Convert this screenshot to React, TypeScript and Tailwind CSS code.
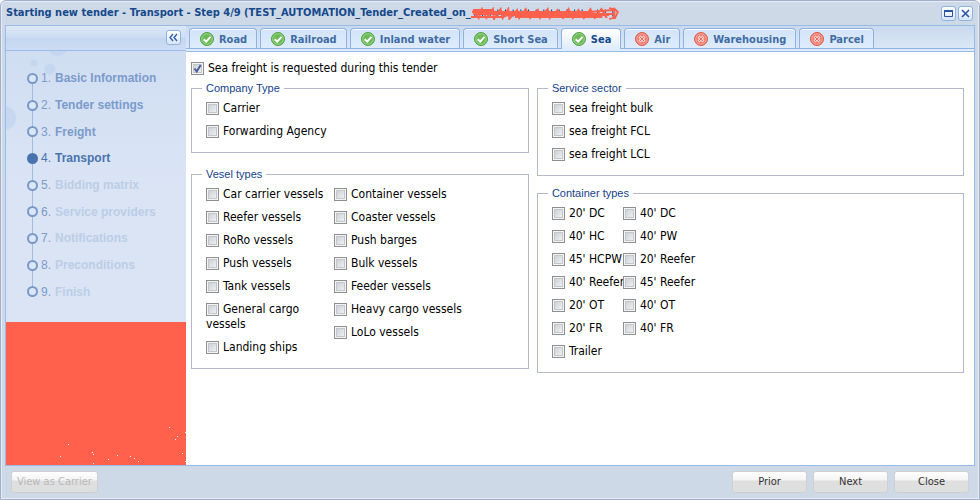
import React from "react";

type TabInfo = { name: string; ok: boolean; active?: boolean };

const tabs: TabInfo[] = [
  { name: "Road", ok: true },
  { name: "Railroad", ok: true },
  { name: "Inland water", ok: true },
  { name: "Short Sea", ok: true },
  { name: "Sea", ok: true, active: true },
  { name: "Air", ok: false },
  { name: "Warehousing", ok: false },
  { name: "Parcel", ok: false },
];

const steps = [
  "Basic Information",
  "Tender settings",
  "Freight",
  "Transport",
  "Bidding matrix",
  "Service providers",
  "Notifications",
  "Preconditions",
  "Finish",
];
const currentStep = 3;

const vesselsLeft = [
  "Car carrier vessels",
  "Reefer vessels",
  "RoRo vessels",
  "Push vessels",
  "Tank vessels",
  "General cargo vessels",
  "Landing ships",
];
const vesselsRight = [
  "Container vessels",
  "Coaster vessels",
  "Push barges",
  "Bulk vessels",
  "Feeder vessels",
  "Heavy cargo vessels",
  "LoLo vessels",
];
const containersLeft = ["20' DC", "40' HC", "45' HCPW", "40' Reefer", "20' OT", "20' FR", "Trailer"];
const containersRight = ["40' DC", "40' PW", "20' Reefer", "45' Reefer", "40' OT", "40' FR"];

function StatusIcon({ ok }: { ok: boolean }) {
  return ok ? (
    <svg viewBox="0 0 14 14" className="size-3.5 shrink-0" aria-hidden="true">
      <circle cx="7" cy="7" r="6.5" fill="#6dbb58" stroke="#4fa045" />
      <circle cx="7" cy="7" r="5.3" fill="none" stroke="#a5d893" strokeWidth="0.8" />
      <path d="M3.7 7.2 6.2 9.6 10.5 4.8" fill="none" stroke="#fff" strokeWidth="2" />
    </svg>
  ) : (
    <svg viewBox="0 0 14 14" className="size-3.5 shrink-0" aria-hidden="true">
      <circle cx="7" cy="7" r="6.5" fill="#f07a6c" stroke="#de5a4c" />
      <circle cx="7" cy="7" r="5.2" fill="none" stroke="#f9b3a9" strokeWidth="0.8" />
      <path d="M4.5 4.5 9.5 9.5M9.5 4.5 4.5 9.5" stroke="#fff" strokeWidth="2.6" />
      <path d="M4.7 4.7 9.3 9.3M9.3 4.7 4.7 9.3" stroke="#e5685c" strokeWidth="1.2" />
    </svg>
  );
}

function Check({ label, checked }: { label: string; checked?: boolean }) {
  return (
    <label className="block py-1 leading-[15px]">
      <span className="relative mr-1 inline-block size-[13px] align-[-3px]">
        <input
          type="checkbox"
          defaultChecked={checked}
          className="peer block size-[13px] appearance-none border border-[#8e8f8f] bg-linear-to-br from-[#c4c9d0] to-[#f8f8f8] shadow-[inset_0_0_0_1px_#f4f4f4,inset_0_0_0_2px_#c3c7cc]"
        />
        <svg
          viewBox="0 0 13 13"
          className="pointer-events-none absolute inset-0 hidden size-[13px] peer-checked:block"
          aria-hidden="true"
        >
          <path d="M3.5 6.5 5.7 9.5 9.7 3" fill="none" stroke="#4a5f97" strokeWidth="2" />
        </svg>
      </span>
      {label}
    </label>
  );
}

function Group({ title, children }: { title: string; children: React.ReactNode }) {
  return (
    <fieldset className="min-w-0 border border-[#b5b8c8] px-[10px] pb-[9px]">
      <legend className="px-1 font-[Liberation_Sans,Arial,sans-serif] text-[11px] leading-[14px] text-[#15428b]">
        {title}
      </legend>
      <div className="flex pt-0.5 pl-1">{children}</div>
    </fieldset>
  );
}

function ToolButton({ label, children }: { label: string; children: React.ReactNode }) {
  return (
    <button
      type="button"
      aria-label={label}
      className="flex size-[15px] items-center justify-center rounded-[3px] border border-[#8db2e3] bg-linear-to-b from-white to-[#d7e6f8]"
    >
      {children}
    </button>
  );
}

function FooterButton({ label, disabled }: { label: string; disabled?: boolean }) {
  return (
    <button
      type="button"
      disabled={disabled}
      className="h-[22px] min-w-[75px] rounded-[3px] border border-[#d0d0d0] bg-linear-to-b from-white from-0% via-[#f4f4f4] via-40% to-[#dfdfdf] to-45% px-[5px] text-[11px] leading-4 text-[#333] disabled:text-[#b9b9b9]"
    >
      {label}
    </button>
  );
}

function Sidebar() {
  return (
    <aside className="flex w-[180px] shrink-0 flex-col bg-[#dae4f5]">
      <div className="h-[25px] border-b border-[#99bbe8] bg-linear-to-b from-[#b9d0ee] to-[#cdddf3]">
        <div className="h-3 bg-linear-to-b from-[#dde8f6] to-[#cbdcf2]" />
        <div className="-mt-2 flex justify-end pr-[5px]">
          <ToolButton label="Collapse">
            <svg viewBox="0 0 9 9" className="size-[9px]" aria-hidden="true">
              <path d="M4 1 1 4.5 4 8M8 1 5 4.5 8 8" fill="none" stroke="#2f5ba8" strokeWidth="1.3" />
            </svg>
          </ToolButton>
        </div>
      </div>
      <nav
        aria-label="Steps"
        className="relative overflow-hidden bg-linear-to-b from-[#d0def2] to-[#dae4f5] to-50% pt-3.5 pb-[17px] font-[Liberation_Sans,Arial,sans-serif] text-[12px]"
      >
        <svg className="absolute top-0 left-0" width="180" height="120" aria-hidden="true">
          <g fill="#b9cdeb" fillOpacity="0.5">
            <circle cx="52" cy="-5" r="10" />
            <circle cx="28" cy="12" r="3.5" />
            <circle cx="44" cy="18" r="5.5" />
            <circle cx="-2" cy="67" r="12" />
          </g>
        </svg>
        <span className="absolute top-7 bottom-7 left-[26px] w-px bg-[#a3bcdd]" />
        <ol className="relative flex h-[240px] flex-col">
          {steps.map((step, i) => (
            <li
              key={step}
              className={
                "flex flex-1 items-center pl-[21px] " +
                (i === currentStep ? "text-[#4a73ad]" : "text-[#7b9bcb]")
              }
            >
              <span
                className={
                  "size-[11px] rounded-full border-2 " +
                  (i === currentStep ? "border-[#4a73ad] bg-[#4a73ad]" : "border-[#7899c8] bg-[#dce7f6]")
                }
              />
              <span className="w-[17px] pl-[3px]">{i + 1}.</span>
              <b className={i > currentStep ? "text-[#bccde7]" : ""}>{step}</b>
            </li>
          ))}
        </ol>
      </nav>
      <div className="flex flex-1 items-end justify-end bg-[#ff614d]">
        <svg width="136" height="45" fill="#fff" aria-hidden="true">
          <path d="M119 7h1v1h-1zM127 16h1v1h-1zM125 19h1v1h-1zM18 24h1v1h-1zM10 36h1v1h-1zM42 32h1v1h-1zM43 34h1v1h-1zM43 43h1v1h-1zM58 39h1v1h-1zM67 35h1v1h-1zM80 36h1v1h-1zM84 38h1v1h-1zM88 41h1v1h-1zM135 12h1v1h-1zM132 33h1v1h-1zM135 41h1v1h-1z" />
        </svg>
      </div>
    </aside>
  );
}

export default function App() {
  return (
    <div className="flex min-h-screen flex-col rounded-t-md border border-[#a3afc8] bg-[#ced9e7] px-1 font-[DejaVu_Sans_Condensed,Tahoma,sans-serif] text-[12px] text-black shadow-[inset_0_0_0_1px_#e6edf6]">
      <header className="flex h-6 items-center justify-between pr-0.5 pl-px">
        <h1 className="flex items-center text-[11px] font-bold whitespace-nowrap text-[#15498b]">
          Starting new tender - Transport - Step 4/9 (TEST_AUTOMATION_Tender_Created_on_
          <svg
            viewBox="0 0 136 13"
            preserveAspectRatio="none"
            className="h-[13px] w-[149px]"
            aria-hidden="true"
          >
            <path d="M3 6H134" stroke="#17498b" strokeWidth="7" strokeDasharray="1 6" />
            <path
              d="M2 3H18L22 5H108L130 3M0 10H28L34 8H126M1 5H20M2 7H130M40 10H120"
              fill="none"
              stroke="#ff614d"
              strokeWidth="2.2"
            />
            <path
              d="M2 3 7 11 10 2 14 11 20 2 21 12 27 2 29 11 34 2 35 12 42 3 44 11 50 2 54 11 61 3 63 11 70 2 72 11 79 3 84 11 89 2 93 11 98 3 103 11 109 2 113 11 119 2 124 11M126 1 130 2 131 6 130 11 126 12M130 1 134 5 131 12"
              fill="none"
              stroke="#ff614d"
              strokeWidth="1.8"
            />
          </svg>
        </h1>
        <div className="flex gap-0.5">
          <ToolButton label="Maximize">
            <svg viewBox="0 0 9 7" className="h-[7px] w-[9px]" aria-hidden="true">
              <path d="M.5 1V6.5H8.5V1" fill="none" stroke="#2b54a5" />
              <path d="M0 1H9" stroke="#2b54a5" strokeWidth="2" />
            </svg>
          </ToolButton>
          <ToolButton label="Close window">
            <svg viewBox="0 0 9 9" className="size-[9px]" aria-hidden="true">
              <path d="M1 1 8 8M8 1 1 8" stroke="#2b54a5" strokeWidth="1.6" />
            </svg>
          </ToolButton>
        </div>
      </header>

      <div className="flex flex-1 border border-[#99bbe8] bg-white">
        <Sidebar />
        <main className="min-w-0 flex-1">
          <div
            role="tablist"
            className="flex h-[23px] items-end gap-[3px] border-b border-[#8db2e3] bg-linear-to-b from-[#c9d9ee] to-[#dbe7f5] pl-[3px]"
          >
            {tabs.map((tab) => (
              <button
                key={tab.name}
                type="button"
                role="tab"
                aria-selected={!!tab.active}
                className={
                  "flex items-center gap-[5px] rounded-t-[4px] border border-b-0 border-[#8db2e3] pr-[9px] pl-2.5 text-[11px] font-bold shadow-[inset_0_1px_0_#fff] " +
                  (tab.active
                    ? "-mb-px h-[21px] bg-linear-to-b from-white to-[#deecfd] text-[#15498b]"
                    : "h-5 bg-linear-to-b from-[#d3e3f8] to-[#deecfd] text-[#416da3]")
                }
              >
                <StatusIcon ok={tab.ok} />
                <span className="pt-0.5 leading-4">{tab.name}</span>
              </button>
            ))}
          </div>
          <div className="h-[3px] border-b border-[#99bbe8] bg-[#deecfd]" />

          <div className="pt-[5px] pr-[10px] pl-[5px]">
            <Check label="Sea freight is requested during this tender" checked />
            <div className="mt-px grid grid-cols-[53fr_67fr] gap-2">
              <div className="flex flex-col gap-3.5">
                <Group title="Company Type">
                  <div>
                    <Check label="Carrier" />
                    <Check label="Forwarding Agency" />
                  </div>
                </Group>
                <Group title="Vesel types">
                  <div className="w-32 pr-2">
                    {vesselsLeft.map((v) => (
                      <Check key={v} label={v} />
                    ))}
                  </div>
                  <div>
                    {vesselsRight.map((v) => (
                      <Check key={v} label={v} />
                    ))}
                  </div>
                </Group>
              </div>
              <div className="flex flex-col gap-[10px]">
                <Group title="Service sector">
                  <div>
                    <Check label="sea freight bulk" />
                    <Check label="sea freight FCL" />
                    <Check label="sea freight LCL" />
                  </div>
                </Group>
                <Group title="Container types">
                  <div className="w-[71px] whitespace-nowrap">
                    {containersLeft.map((c) => (
                      <Check key={c} label={c} />
                    ))}
                  </div>
                  <div>
                    {containersRight.map((c) => (
                      <Check key={c} label={c} />
                    ))}
                  </div>
                </Group>
              </div>
            </div>
          </div>
        </main>
      </div>

      <footer className="flex h-[33px] items-start gap-1.5 px-1.5 pt-[5px]">
        <FooterButton label="View as Carrier" disabled />
        <span className="flex-1" />
        <FooterButton label="Prior" />
        <FooterButton label="Next" />
        <FooterButton label="Close" />
      </footer>
    </div>
  );
}
